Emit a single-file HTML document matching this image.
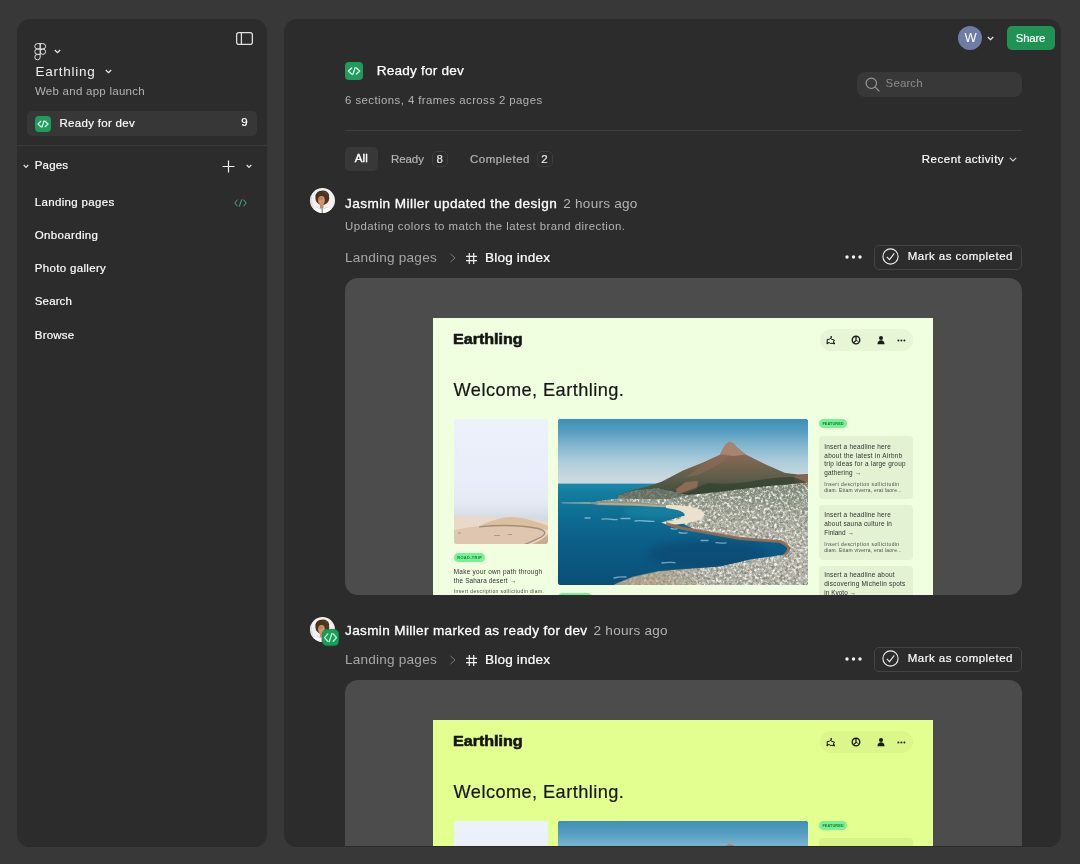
<!DOCTYPE html>
<html>
<head>
<meta charset="utf-8">
<title>Ready for dev</title>
<style>
*{box-sizing:border-box;margin:0;padding:0}
html,body{width:1080px;height:864px;overflow:hidden;background:#383838}
body{font-family:"Liberation Sans",sans-serif;color:#fff;position:relative;-webkit-font-smoothing:antialiased}
.abs{position:absolute}
.panel:after{content:'';position:absolute;left:0;right:0;bottom:0;height:1.8px;background:#2a2a2a}
.panel{position:absolute;background:#2c2c2c;border-radius:13px;overflow:hidden;will-change:transform}
#side{left:17px;top:19px;width:250px;height:828.3px}
#main{left:284px;top:19px;width:777px;height:828.3px}
.t{position:absolute;white-space:nowrap;line-height:16px;font-size:12px;color:#fff}
.med{-webkit-text-stroke:0.35px currentColor}
.sec{color:#b3b3b3}
svg{position:absolute;overflow:visible}

.ttl,.ago,.crumb{font-size:14px;line-height:20px}
.mock{position:absolute;width:500px;overflow:hidden;color:#1a1a1a}
.mock div{position:absolute;white-space:nowrap}
.mock .t{line-height:normal}
.mlogo{left:20px;top:12px;font-size:14px;line-height:18px;font-weight:bold;-webkit-text-stroke:0.7px #151515;color:#151515;letter-spacing:0.3px}
.mpill{left:387px;top:11px;width:93px;height:22px;border-radius:11px;background:rgba(0,0,0,0.036)}
.mwel{left:21px;top:62px;font-size:18px;line-height:24px;color:#161616}
.mimg1{left:21px;top:101px;width:94px;height:125px;border-radius:3px;overflow:hidden;background:linear-gradient(#ecf1fb 0%,#e9edf9 50%,#e5eaf4 66%,#dbe1eb 75%,#d4dae4 79%,#d4dae4 100%)}
.mtag{height:9px;border-radius:4.5px;background:#76f294;color:#1c7a3c;font-size:3.6px;line-height:9px;text-align:center;font-weight:bold;letter-spacing:0.25px}
.mh{font-size:6.3px;line-height:8px;color:#222;left:5px}
.md{font-size:4.9px;line-height:6px;color:#333;left:5px}
.mcard{left:386px;width:94px;border-radius:4px;background:rgba(0,0,0,0.05)}
</style>
</head>
<body>

<!-- ================= SIDEBAR ================= -->
<div class="panel" id="side"><div class="abs" style="left:-17px;top:-19px;width:1080px;height:864px">
  <!-- panel toggle icon -->
  <svg style="left:236.3px;top:31.8px" width="17" height="13" viewBox="0 0 17 13"><rect x="0.65" y="0.65" width="15.7" height="11.7" rx="2.2" fill="none" stroke="#e0e0e0" stroke-width="1.25"/><line x1="5.4" y1="1" x2="5.4" y2="12" stroke="#e0e0e0" stroke-width="1.25"/></svg>
  <!-- figma logo -->
  <svg style="left:34px;top:43px" width="13" height="17" viewBox="0 0 13 17" fill="none" stroke="#e2e2e2" stroke-width="1">
    <path d="M6.2 0.6H3.5a2.7 2.7 0 0 0 0 5.4h2.7z"/>
    <path d="M6.2 0.6h2.7a2.7 2.7 0 0 1 0 5.4H6.2z"/>
    <path d="M6.2 6H3.5a2.7 2.7 0 0 0 0 5.4h2.7z"/>
    <circle cx="8.9" cy="8.7" r="2.7"/>
    <path d="M6.2 11.4H3.5a2.7 2.7 0 1 0 2.7 2.7z"/>
  </svg>
  <svg style="left:54px;top:49px" width="7" height="5" viewBox="0 0 7 5"><path d="M0.8 1l2.7 2.7L6.2 1" fill="none" stroke="#e6e6e6" stroke-width="1.3"/></svg>
  <svg style="left:105px;top:69px" width="7" height="5" viewBox="0 0 7 5"><path d="M0.8 1l2.7 2.7L6.2 1" fill="none" stroke="#e6e6e6" stroke-width="1.3"/></svg>

  <!-- selected row -->
  <div class="abs" style="left:27px;top:111px;width:230px;height:25px;border-radius:5px;background:#373737"></div>
  <svg style="left:35px;top:116px" width="16" height="16" viewBox="0 0 16 16"><rect width="16" height="16" rx="4" fill="#1f9b5c"/><path d="M5.9 5.3L3 8l2.9 2.7M10.1 5.3L13 8l-2.9 2.7M9 4.9L7 11.1" fill="none" stroke="#dcf8e6" stroke-width="1.25" stroke-linecap="round" stroke-linejoin="round"/></svg>

  <div class="abs" style="left:17px;top:145.3px;width:250px;height:1px;background:#3a3a3a"></div>

  <svg style="left:23px;top:164px" width="6" height="5" viewBox="0 0 6 5"><path d="M0.7 1l2.3 2.3L5.3 1" fill="none" stroke="#e6e6e6" stroke-width="1.2"/></svg>
  <svg style="left:222px;top:160px" width="13" height="13" viewBox="0 0 13 13"><path d="M6.5 0.5v12M0.5 6.5h12" stroke="#f0f0f0" stroke-width="1.2"/></svg>
  <svg style="left:246px;top:164px" width="6" height="5" viewBox="0 0 6 5"><path d="M0.7 1l2.3 2.3L5.3 1" fill="none" stroke="#e6e6e6" stroke-width="1.2"/></svg>
  <svg style="left:234px;top:199px" width="13" height="8" viewBox="0 0 13 8"><path d="M3.2 1L0.8 4l2.4 3M9.8 1l2.4 3-2.4 3M7.6 0.8L5.4 7.2" fill="none" stroke="#48ae80" stroke-width="1" stroke-linecap="round" stroke-linejoin="round"/></svg>
  <div class="t" style="left:35.60px;top:61.52px;font-size:13.5px;line-height:19px;color:#f0f0f0;letter-spacing:0.738px;">Earthling</div><div class="t" style="left:34.90px;top:83.42px;font-size:11.5px;line-height:16px;color:#b3b3b3;letter-spacing:0.265px;">Web and app launch</div><div class="t" style="left:59.50px;top:114.62px;font-size:11.5px;line-height:16px;color:#ffffff;letter-spacing:0.299px;-webkit-text-stroke:0.18px #ffffff;">Ready for dev</div><div class="t" style="left:241.20px;top:114.42px;font-size:11.5px;line-height:16px;color:#ffffff;-webkit-text-stroke:0.18px #ffffff;">9</div><div class="t" style="left:34.80px;top:157.42px;font-size:11.5px;line-height:16px;color:#ffffff;letter-spacing:0.148px;-webkit-text-stroke:0.18px #ffffff;">Pages</div><div class="t" style="left:34.80px;top:194.12px;font-size:11.5px;line-height:16px;color:#ffffff;letter-spacing:0.328px;-webkit-text-stroke:0.18px #ffffff;">Landing pages</div><div class="t" style="left:34.80px;top:227.22px;font-size:11.5px;line-height:16px;color:#ffffff;letter-spacing:0.343px;-webkit-text-stroke:0.18px #ffffff;">Onboarding</div><div class="t" style="left:34.80px;top:260.32px;font-size:11.5px;line-height:16px;color:#ffffff;letter-spacing:0.323px;-webkit-text-stroke:0.18px #ffffff;">Photo gallery</div><div class="t" style="left:34.80px;top:293.42px;font-size:11.5px;line-height:16px;color:#ffffff;letter-spacing:0.133px;-webkit-text-stroke:0.18px #ffffff;">Search</div><div class="t" style="left:34.80px;top:326.52px;font-size:11.5px;line-height:16px;color:#ffffff;letter-spacing:0.208px;-webkit-text-stroke:0.18px #ffffff;">Browse</div>
</div></div>

<!-- ================= MAIN ================= -->
<div class="panel" id="main"><div class="abs" id="mainin" style="left:-284px;top:-19px;width:1080px;height:864px">
  <!-- top right -->
  <div class="abs" style="left:958px;top:26px;width:24px;height:24px;border-radius:12px;background:#6e7ca6"></div>
  <svg style="left:987px;top:36px" width="7" height="5" viewBox="0 0 7 5"><path d="M0.8 1l2.7 2.7L6.2 1" fill="none" stroke="#e6e6e6" stroke-width="1.3"/></svg>
  <div class="abs" style="left:1007px;top:26px;width:48px;height:24px;border-radius:5px;background:#1f9254"></div>

  <!-- header -->
  <svg style="left:345px;top:62px" width="18" height="18" viewBox="0 0 16 16"><rect width="16" height="16" rx="3.6" fill="#1f9b5c"/><path d="M5.9 5.3L3 8l2.9 2.7M10.1 5.3L13 8l-2.9 2.7M9 4.9L7 11.1" fill="none" stroke="#dcf8e6" stroke-width="1.15" stroke-linecap="round" stroke-linejoin="round"/></svg>

  <!-- search -->
  <div class="abs" style="left:857px;top:72px;width:165px;height:25px;border-radius:8px;background:#383838"></div>
  <svg style="left:865px;top:77px" width="15" height="15" viewBox="0 0 15 15"><circle cx="6.3" cy="6.3" r="5.2" fill="none" stroke="#9c9c9c" stroke-width="1.1"/><path d="M10.2 10.2l3.8 3.8" stroke="#9c9c9c" stroke-width="1.1" stroke-linecap="round"/></svg>

  <div class="abs" style="left:345px;top:130px;width:677px;height:1px;background:#3e3e3e"></div>

  <!-- tabs -->
  <div class="abs" style="left:345px;top:147px;width:33px;height:24px;border-radius:5px;background:#383838"></div>
  <div class="abs" style="left:432.2px;top:151.2px;width:15.8px;height:15.8px;border-radius:5px;border:1px solid #3d3d3d"></div>
  <div class="abs" style="left:537px;top:151.2px;width:15.8px;height:15.8px;border-radius:5px;border:1px solid #3d3d3d"></div>
  <svg style="left:1009px;top:157px" width="8" height="5" viewBox="0 0 8 5"><path d="M0.8 0.8l3.2 3.2 3.2-3.2" fill="none" stroke="#cfcfcf" stroke-width="1.1"/></svg>

  <div class="t" style="left:964.50px;top:28.83px;font-size:12.9px;line-height:18px;color:#ffffff;">W</div><div class="t" style="left:1015.80px;top:30.18px;font-size:11.3px;line-height:16px;color:#ffffff;letter-spacing:-0.164px;-webkit-text-stroke:0.18px #ffffff;">Share</div><div class="t" style="left:376.70px;top:60.79px;font-size:13.6px;line-height:19px;color:#ffffff;letter-spacing:0.213px;-webkit-text-stroke:0.25px #ffffff;">Ready for dev</div><div class="t" style="left:345.10px;top:91.55px;font-size:11.4px;line-height:16px;color:#b3b3b3;letter-spacing:0.431px;">6 sections, 4 frames across 2 pages</div><div class="t" style="left:885.60px;top:75.02px;font-size:11.5px;line-height:16px;color:#8c8c8c;letter-spacing:0.113px;">Search</div><div class="t" style="left:354.70px;top:150.42px;font-size:11.5px;line-height:16px;color:#ffffff;letter-spacing:0.209px;-webkit-text-stroke:0.42px #ffffff;">All</div><div class="t" style="left:390.90px;top:150.52px;font-size:11.5px;line-height:16px;color:#b3b3b3;letter-spacing:-0.062px;-webkit-text-stroke:0.2px #b3b3b3;">Ready</div><div class="t" style="left:436.50px;top:150.92px;font-size:11.5px;line-height:16px;color:#e6e6e6;-webkit-text-stroke:0.2px #e6e6e6;">8</div><div class="t" style="left:470.00px;top:150.52px;font-size:11.5px;line-height:16px;color:#b3b3b3;letter-spacing:0.472px;-webkit-text-stroke:0.2px #b3b3b3;">Completed</div><div class="t" style="left:541.30px;top:150.92px;font-size:11.5px;line-height:16px;color:#e6e6e6;-webkit-text-stroke:0.2px #e6e6e6;">2</div><div class="t" style="left:921.80px;top:150.52px;font-size:11.5px;line-height:16px;color:#ffffff;letter-spacing:0.501px;-webkit-text-stroke:0.18px #ffffff;">Recent activity</div>
  <svg style="left:309.9px;top:188.1px" width="25" height="25" viewBox="0 0 25 25"><defs><clipPath id="avc1"><circle cx="12.5" cy="12.5" r="12.4"/></clipPath><filter id="avb1" x="-20%" y="-20%" width="140%" height="140%"><feGaussianBlur stdDeviation="0.55"/></filter></defs><circle cx="12.5" cy="12.5" r="12.5" fill="#f1f1ef"/><g clip-path="url(#avc1)"><g filter="url(#avb1)"><path d="M3 25c.5-3.5 3-5 6.5-5.500h6c3.5.5 6 2 6.5 5.500z" fill="#fbfbfa"/><path d="M1 8c0 6 1.5 12 3.5 17" stroke="#dcdedd" stroke-width="1.4" fill="none"/><ellipse cx="12.3" cy="10.2" rx="6.9" ry="6.7" fill="#50341f"/><path d="M5.8 8.500c.5-3 2.5-4.8 5.5-5.2 3.5-.4 6.5 1.2 7.4 4.5" fill="none" stroke="#3b2a1c" stroke-width="1.2"/><rect x="9.9" y="14.5" width="3.6" height="6.2" rx="1.2" fill="#c58b68"/><ellipse cx="11.5" cy="12.3" rx="3.3" ry="4.3" fill="#d09673"/><ellipse cx="10.8" cy="10.6" rx="2.2" ry="1.3" fill="#b9805e"/><path d="M12.2 20.800v4.2" stroke="#5a5f63" stroke-width="0.9"/><path d="M6.5 19.200l4 1.800M17.5 19.200l-4 1.8" stroke="#c9cccb" stroke-width="0.7"/></g></g></svg><div class="t" style="left:345.00px;top:193.59px;font-size:13.6px;line-height:19px;color:#ffffff;letter-spacing:0.418px;-webkit-text-stroke:0.3px #ffffff;">Jasmin Miller updated the design</div><div class="t" style="left:563.30px;top:193.59px;font-size:13.6px;line-height:19px;color:#b3b3b3;letter-spacing:0.219px;">2 hours ago</div><div class="t" style="left:345.00px;top:218.25px;font-size:11.4px;line-height:16px;color:#b3b3b3;letter-spacing:0.450px;">Updating colors to match the latest brand direction.</div><div class="t" style="left:345.00px;top:247.99px;font-size:13.6px;line-height:19px;color:#a6a6a6;letter-spacing:0.208px;">Landing pages</div><svg style="left:448.5px;top:253px" width="8" height="10" viewBox="0 0 8 10"><path d="M1.5 1l4.5 4-4.5 4" fill="none" stroke="#7c7c7c" stroke-width="1"/></svg><svg style="left:466px;top:253px" width="11" height="11" viewBox="0 0 11 11"><path d="M3.3 0v11M7.7 0v11M0 3.3h11M0 7.7h11" stroke="#f0f0f0" stroke-width="1.2"/></svg><div class="t" style="left:485.00px;top:247.99px;font-size:13.6px;line-height:19px;color:#ffffff;letter-spacing:0.168px;-webkit-text-stroke:0.22px #ffffff;">Blog index</div><svg style="left:844.8px;top:254.8px" width="17" height="4" viewBox="0 0 17 4" fill="#f2f2f2"><circle cx="2" cy="2" r="1.7"/><circle cx="8.5" cy="2" r="1.7"/><circle cx="15" cy="2" r="1.7"/></svg><div class="abs" style="left:874px;top:245px;width:147.5px;height:24.5px;border-radius:5px;border:1px solid #444"></div><svg style="left:882.2px;top:248.2px" width="17" height="17" viewBox="0 0 17 17"><circle cx="8.5" cy="8.5" r="7.6" fill="none" stroke="#f0f0f0" stroke-width="1.1"/><path d="M4.8 8.9l2.7 2.8 4.8-6.3" fill="none" stroke="#f0f0f0" stroke-width="1.1"/></svg><div class="t" style="left:907.80px;top:247.82px;font-size:11.5px;line-height:16px;color:#ffffff;letter-spacing:0.465px;-webkit-text-stroke:0.18px #ffffff;">Mark as completed</div><div class="abs" style="left:345px;top:278px;width:677px;height:317px;border-radius:13px;background:#4c4c4c;overflow:hidden"><div class="mock" style="left:88px;top:40px;height:277px;background:#efffdf"><div class="t" style="left:20.00px;top:10.65px;font-size:14px;line-height:20px;color:#151515;font-weight:bold;-webkit-text-stroke:0.55px #151515;transform:scaleX(1.1472);transform-origin:0 50%;">Earthling</div><div class="mpill"></div>
<svg style="left:393px;top:17px" width="10" height="10" viewBox="0 0 10 10" fill="none" stroke="#1a1a1a" stroke-width="1"><path d="M1.2 8.2V4.4h2.2L4.6 3l1 1.4 2.8.6-1 2 .8 1.4H4.2L3 7.4 1.2 8.2z" stroke-linejoin="round"/><circle cx="1.4" cy="8.3" r="0.9" fill="#1a1a1a" stroke="none"/><circle cx="8.2" cy="8.4" r="0.9" fill="#1a1a1a" stroke="none"/><circle cx="5.2" cy="2" r="0.9" fill="#1a1a1a" stroke="none"/></svg>
<svg style="left:418px;top:17px" width="10" height="10" viewBox="0 0 10 10" fill="none" stroke="#1a1a1a" stroke-width="1.35"><circle cx="5" cy="5" r="3.8"/><path d="M5 1.300v4.100l-2.3 2.2" stroke-width="1.25"/><path d="M5.2 5.300l2.3 1.3" stroke-width="0.9"/></svg>
<svg style="left:443px;top:17px" width="10" height="10" viewBox="0 0 10 10" fill="#1a1a1a"><circle cx="5" cy="2.9" r="2"/><path d="M1.4 9.2c.2-2.6 1.6-3.9 3.6-3.9s3.4 1.3 3.6 3.9z"/></svg>
<svg style="left:464.2px;top:20.6px" width="9" height="3" viewBox="0 0 9 3" fill="#1a1a1a"><circle cx="1.4" cy="1.5" r="0.95"/><circle cx="4.4" cy="1.5" r="0.95"/><circle cx="7.4" cy="1.5" r="0.95"/></svg>
<div class="t" style="left:20.60px;top:60.29px;font-size:18.2px;line-height:25px;color:#161616;letter-spacing:0.432px;-webkit-text-stroke:0.2px #161616;">Welcome, Earthling.</div><div class="mimg1"><svg style="left:0;top:0" width="94" height="125" viewBox="0 0 94 125"><defs><filter id="ds1" x="-5%" y="-5%" width="110%" height="110%"><feGaussianBlur stdDeviation="0.6"/></filter></defs><g filter="url(#ds1)"><path d="M-2 98.5 Q12 96.5 22 98 Q34 97 44 99 Q60 95.5 76 100 Q86 101 96 103.5 V127 H-2Z" fill="#ead8c9"/><path d="M25 107.5 Q36 101.5 50 98.6 Q64 96.5 78 101.5 Q90 105 96 108 V112 Q70 104 25 107.500Z" fill="#dcbf9f"/><path d="M25 107.5 Q60 104 84 109 Q96 112 90 117 Q82 122 70 127 H-2 V112 Q10 108 25 107.500Z" fill="#dfc6b1"/><path d="M25 107.8 Q60 104.5 84 109.5 Q95 112.5 88 117.5 Q80 122 69 126" fill="none" stroke="#a48c7b" stroke-width="1.3"/><path d="M96 110 Q96 118 74 127 H96Z" fill="#c9ab92"/><path d="M4 114h3M40 116.500h6M54 115.500h4" stroke="#a8917f" stroke-width="0.9"/></g></svg></div><div class="mtag" style="left:21px;top:235px;width:31px"></div><div class="t" style="left:24.30px;top:236.75px;font-size:3.9px;line-height:5px;color:#167a3a;letter-spacing:0.359px;font-weight:bold;">ROAD-TRIP</div><div class="t" style="left:20.70px;top:249.08px;font-size:6.4px;line-height:9px;color:#303030;letter-spacing:0.296px;">Make your own path through</div><div class="t" style="left:20.70px;top:257.68px;font-size:6.4px;line-height:9px;color:#303030;letter-spacing:0.195px;">the Sahara desert →</div><div class="t" style="left:20.70px;top:270.30px;font-size:4.9px;line-height:7px;color:#4a4a4a;letter-spacing:0.434px;">Insert description sollicitudin diam.</div><svg class="photo" style="left:125.4px;top:101.4px;border-radius:3px;overflow:hidden" width="250" height="166" viewBox="0 0 250 166">
  <defs>
    <linearGradient id="skyG1" x1="0" y1="0" x2="0" y2="1"><stop offset="0" stop-color="#3f8fb6"/><stop offset="0.2" stop-color="#579fc2"/><stop offset="0.4" stop-color="#82b6ce"/><stop offset="0.6" stop-color="#a5c8d8"/><stop offset="0.82" stop-color="#c2d6de"/><stop offset="1" stop-color="#cfdbe0"/></linearGradient>
    <linearGradient id="seaG1" x1="0" y1="0" x2="0" y2="1"><stop offset="0" stop-color="#1c89ab"/><stop offset="0.1" stop-color="#127c9f"/><stop offset="0.3" stop-color="#0e6e94"/><stop offset="0.55" stop-color="#0c5f88"/><stop offset="1" stop-color="#0a4f78"/></linearGradient>
    <linearGradient id="mtG1" gradientUnits="userSpaceOnUse" x1="0" y1="22" x2="0" y2="80"><stop offset="0" stop-color="#a98672"/><stop offset="0.16" stop-color="#8f6b56"/><stop offset="0.4" stop-color="#77644f"/><stop offset="0.64" stop-color="#5c5d4a"/><stop offset="1" stop-color="#3a4835"/></linearGradient>
    <linearGradient id="ctG1" gradientUnits="userSpaceOnUse" x1="0" y1="64" x2="0" y2="166"><stop offset="0" stop-color="#76826f"/><stop offset="0.25" stop-color="#9fa192"/><stop offset="0.6" stop-color="#b9b7ab"/><stop offset="1" stop-color="#b4afa5"/></linearGradient>
    <filter id="nz1" x="0" y="0" width="100%" height="100%"><feTurbulence type="fractalNoise" baseFrequency="0.36" numOctaves="3" seed="7" result="n"/><feColorMatrix in="n" type="matrix" values="0 0 0 0 0.97  0 0 0 0 0.95  0 0 0 0 0.91  2.8 0 0 0 -1.24" result="lite"/><feColorMatrix in="n" type="matrix" values="0 0 0 0 0.2  0 0 0 0 0.25  0 0 0 0 0.19  0 2.8 0 0 -1.2" result="dark"/><feMerge result="m"><feMergeNode in="SourceGraphic"/><feMergeNode in="lite"/><feMergeNode in="dark"/></feMerge><feComposite in="m" in2="SourceGraphic" operator="in"/></filter>
    <linearGradient id="tnG1" gradientUnits="userSpaceOnUse" x1="56" y1="0" x2="150" y2="0"><stop offset="0" stop-color="#a8977c" stop-opacity="0.7"/><stop offset="0.6" stop-color="#a8977c" stop-opacity="0.45"/><stop offset="1" stop-color="#a8977c" stop-opacity="0"/></linearGradient>
    <filter id="bl1" x="-10%" y="-10%" width="120%" height="120%"><feGaussianBlur stdDeviation="0.7"/></filter>
    <filter id="bl21" x="-20%" y="-20%" width="140%" height="140%"><feGaussianBlur stdDeviation="3"/></filter>
  </defs>
  <rect width="250" height="166" fill="#0d5482"/>
  <rect width="250" height="66" fill="url(#skyG1)"/>
  <rect y="64.6" width="250" height="102" fill="url(#seaG1)"/>
  <ellipse cx="100" cy="93" rx="34" ry="7" fill="#1a90ad" opacity="0.5" filter="url(#bl21)"/>
  <ellipse cx="150" cy="135" rx="60" ry="14" fill="#0a416b" opacity="0.45" filter="url(#bl21)"/>
  <!-- mountain -->
  <g filter="url(#bl1)">
  <path d="M58 77 L75 71 L90 67.5 L104 62.5 L125 51.5 L145 43.5 L161.9 35.8 L164.9 29.8 L168 25 L171.5 22.8 L175.5 24.6 L179.4 28.7 L187.7 35.6 L207.2 45.3 L226.6 53.7 L240 55.6 L250 55 L250 82 L100 84 Z" fill="url(#mtG1)"/>
  <path d="M161.9 35.8 L164.9 29.8 L168 25 L171.5 22.8 L175.5 24.6 L179.4 28.7 L187.7 35.6 L176 37 L168 36.5 Z" fill="#a8846f"/>
  <path d="M118 70 L128 63 L140 62 L139 70 L128 74 L119 74 Z" fill="#96705b" opacity="0.85"/><path d="M150 42 L165 35 L172 36 L160 46 L140 56 L128 58 Z" fill="#8f6a55" opacity="0.55"/>
  <path d="M236 57 L250 55.5 L250 66 L238 66 Z" fill="#8c6652" opacity="0.9"/>
  <path d="M112 78 Q135 70 150 64 Q170 66 190 63 Q215 58 236 58 L250 64 L250 82 L112 84 Z" fill="#2f3f2d" opacity="0.62"/>
  </g>
  <!-- city / land -->
  <g filter="url(#nz1)">
  <path d="M60 76.5 L78 71 L100 69.5 L130 76 L160 73 L200 68 L250 63.5 L250 166 L56 166 L58 165 L75 158 L100 152.5 L121.6 150.5 L161.8 147.5 L192 140.5 L226 135.5 L233 129 L222 122 L182 119 L137.7 111 L121 103 L104 103 L128 96 L124 89 L110 87.5 L60 84.5 L34 85 L40 82 L60 79.5 Z" fill="url(#ctG1)"/>
  </g>
  <path d="M60 76.5 L78 71 L100 69.5 L130 76 L112 80 L86 80 L60 79.500Z" fill="#566457" opacity="0.7" filter="url(#bl1)"/>
  <!-- thin rocky strip -->
  <path d="M2 84.3 L34 83.3 L44 82 L60 82.5 L80 83 L110 86 L110 88.5 L80 87 L56 86.4 L40 86 L34 85 Z" fill="#8f9488" opacity="0.95" filter="url(#bl1)"/>
  <path d="M40 84.6 L76 85.4 L108 87.5" fill="none" stroke="#bfae95" stroke-width="1.6" opacity="0.85" filter="url(#bl1)"/>
  <!-- beach -->
  <path d="M108 86 Q131 85.5 143 91 Q150 96.5 142 101 Q128 105.5 110 106 L103 103.5 Q121 101.5 126.5 97 Q128.5 91.5 108 89 Z" fill="#ece1cd" filter="url(#bl1)"/>
  <!-- coast edge -->
  <path d="M108 104.5 Q124 110 137.7 111.5 L182 119.5 L222 122.5 Q236 128 227 135.5" fill="none" stroke="#9a6c52" stroke-width="3" opacity="0.9" filter="url(#bl1)"/>
  <path d="M56 166 L58 164.5 L75 157.5 L100 152 L121.6 150 L150 148 L150 166 Z" fill="url(#tnG1)" filter="url(#bl1)"/>
  <!-- foam -->
  <g fill="none" stroke="#d6e8f0" stroke-linecap="round" opacity="0.55" filter="url(#bl1)"><path d="M27 99h5M44 100.200q4-.8 8 0t7 .3M63 99.500h9M77 102q5-.6 10 0t9 .4M113 109.500q3 .8 6 .4M121 113.500q4 .9 8 .4M143 121.500h7M158 123.600q5 .8 10 .2M104 144q6-1 13-.4M56 159q6-1.5 12-1" stroke-width="1.3"/><path d="M4 83.800h28" stroke-width="0.8"/></g>
</svg>
<div class="mtag" style="left:125px;top:275px;width:34px;height:9px"></div><div class="mtag" style="left:386px;top:101px;width:28px"></div><div class="t" style="left:389.40px;top:103.05px;font-size:3.9px;line-height:5px;color:#167a3a;letter-spacing:0.042px;font-weight:bold;">FEATURED</div><div class="mcard" style="top:118px;height:63px"></div><div class="t" style="left:391.30px;top:123.88px;font-size:6.4px;line-height:9px;color:#303030;letter-spacing:0.222px;">Insert a headline here</div><div class="t" style="left:391.30px;top:132.58px;font-size:6.4px;line-height:9px;color:#303030;letter-spacing:0.302px;">about the latest in Airbnb</div><div class="t" style="left:391.30px;top:141.28px;font-size:6.4px;line-height:9px;color:#303030;letter-spacing:0.244px;">trip ideas for a large group</div><div class="t" style="left:391.30px;top:149.98px;font-size:6.4px;line-height:9px;color:#303030;letter-spacing:0.197px;">gathering →</div><div class="t" style="left:391.30px;top:162.70px;font-size:4.9px;line-height:7px;color:#4a4a4a;letter-spacing:0.454px;">Insert description sollicitudin</div><div class="t" style="left:391.30px;top:169.10px;font-size:4.9px;line-height:7px;color:#4a4a4a;letter-spacing:0.245px;">diam. Etiam viverra, erat laore...</div><div class="mcard" style="top:187px;height:55px"></div><div class="t" style="left:391.30px;top:192.48px;font-size:6.4px;line-height:9px;color:#303030;letter-spacing:0.222px;">Insert a headline here</div><div class="t" style="left:391.30px;top:201.28px;font-size:6.4px;line-height:9px;color:#303030;letter-spacing:0.224px;">about sauna culture in</div><div class="t" style="left:391.30px;top:210.08px;font-size:6.4px;line-height:9px;color:#303030;letter-spacing:0.045px;">Finland →</div><div class="t" style="left:391.30px;top:222.70px;font-size:4.9px;line-height:7px;color:#4a4a4a;letter-spacing:0.454px;">Insert description sollicitudin</div><div class="t" style="left:391.30px;top:229.10px;font-size:4.9px;line-height:7px;color:#4a4a4a;letter-spacing:0.245px;">diam. Etiam viverra, erat laore...</div><div class="mcard" style="top:248px;height:60px"></div><div class="t" style="left:391.30px;top:252.48px;font-size:6.4px;line-height:9px;color:#303030;letter-spacing:0.235px;">Insert a headline about</div><div class="t" style="left:391.30px;top:261.28px;font-size:6.4px;line-height:9px;color:#303030;letter-spacing:0.256px;">discovering Michelin spots</div><div class="t" style="left:391.30px;top:269.98px;font-size:6.4px;line-height:9px;color:#303030;letter-spacing:0.048px;">in Kyoto →</div></div></div><svg style="left:309.9px;top:616.8px" width="25" height="25" viewBox="0 0 25 25"><defs><clipPath id="avc2"><circle cx="12.5" cy="12.5" r="12.4"/></clipPath><filter id="avb2" x="-20%" y="-20%" width="140%" height="140%"><feGaussianBlur stdDeviation="0.55"/></filter></defs><circle cx="12.5" cy="12.5" r="12.5" fill="#f1f1ef"/><g clip-path="url(#avc2)"><g filter="url(#avb2)"><path d="M3 25c.5-3.5 3-5 6.5-5.500h6c3.5.5 6 2 6.5 5.500z" fill="#fbfbfa"/><path d="M1 8c0 6 1.5 12 3.5 17" stroke="#dcdedd" stroke-width="1.4" fill="none"/><ellipse cx="12.3" cy="10.2" rx="6.9" ry="6.7" fill="#50341f"/><path d="M5.8 8.500c.5-3 2.5-4.8 5.5-5.2 3.5-.4 6.5 1.2 7.4 4.5" fill="none" stroke="#3b2a1c" stroke-width="1.2"/><rect x="9.9" y="14.5" width="3.6" height="6.2" rx="1.2" fill="#c58b68"/><ellipse cx="11.5" cy="12.3" rx="3.3" ry="4.3" fill="#d09673"/><ellipse cx="10.8" cy="10.6" rx="2.2" ry="1.3" fill="#b9805e"/><path d="M12.2 20.800v4.2" stroke="#5a5f63" stroke-width="0.9"/><path d="M6.5 19.200l4 1.800M17.5 19.200l-4 1.8" stroke="#c9cccb" stroke-width="0.7"/></g></g></svg><svg style="left:321.8px;top:629.3px" width="17.1" height="17.1" viewBox="-0.3 -0.3 17.1 17.1"><rect x="0" y="0" width="16.5" height="16.5" rx="4.6" fill="#1b9d58" stroke="#176f41" stroke-width="0.6"/><path d="M5.5 4.7L2.3 8.3l3.2 3.6M11 4.7l3.2 3.6-3.2 3.600M9.6 4.200L6.9 12.4" fill="none" stroke="#b9f7d6" stroke-width="1.3" stroke-linecap="round" stroke-linejoin="round"/></svg><div class="t" style="left:345.00px;top:620.59px;font-size:13.6px;line-height:19px;color:#ffffff;letter-spacing:0.345px;-webkit-text-stroke:0.3px #ffffff;">Jasmin Miller marked as ready for dev</div><div class="t" style="left:593.60px;top:620.59px;font-size:13.6px;line-height:19px;color:#b3b3b3;letter-spacing:0.219px;">2 hours ago</div><div class="t" style="left:345.00px;top:649.99px;font-size:13.6px;line-height:19px;color:#a6a6a6;letter-spacing:0.208px;">Landing pages</div><svg style="left:448.5px;top:655px" width="8" height="10" viewBox="0 0 8 10"><path d="M1.5 1l4.5 4-4.5 4" fill="none" stroke="#7c7c7c" stroke-width="1"/></svg><svg style="left:466px;top:655px" width="11" height="11" viewBox="0 0 11 11"><path d="M3.3 0v11M7.7 0v11M0 3.3h11M0 7.7h11" stroke="#f0f0f0" stroke-width="1.2"/></svg><div class="t" style="left:485.00px;top:649.99px;font-size:13.6px;line-height:19px;color:#ffffff;letter-spacing:0.168px;-webkit-text-stroke:0.22px #ffffff;">Blog index</div><svg style="left:844.8px;top:656.8px" width="17" height="4" viewBox="0 0 17 4" fill="#f2f2f2"><circle cx="2" cy="2" r="1.7"/><circle cx="8.5" cy="2" r="1.7"/><circle cx="15" cy="2" r="1.7"/></svg><div class="abs" style="left:874px;top:647px;width:147.5px;height:24.5px;border-radius:5px;border:1px solid #444"></div><svg style="left:882.2px;top:650.2px" width="17" height="17" viewBox="0 0 17 17"><circle cx="8.5" cy="8.5" r="7.6" fill="none" stroke="#f0f0f0" stroke-width="1.1"/><path d="M4.8 8.9l2.7 2.8 4.8-6.3" fill="none" stroke="#f0f0f0" stroke-width="1.1"/></svg><div class="t" style="left:907.80px;top:649.82px;font-size:11.5px;line-height:16px;color:#ffffff;letter-spacing:0.465px;-webkit-text-stroke:0.18px #ffffff;">Mark as completed</div><div class="abs" style="left:345px;top:680px;width:677px;height:200px;border-radius:13px;background:#4c4c4c;overflow:hidden"><div class="mock" style="left:88px;top:40px;height:160px;background:#e3ff8f"><div class="t" style="left:20.00px;top:10.65px;font-size:14px;line-height:20px;color:#151515;font-weight:bold;-webkit-text-stroke:0.55px #151515;transform:scaleX(1.1472);transform-origin:0 50%;">Earthling</div><div class="mpill"></div>
<svg style="left:393px;top:17px" width="10" height="10" viewBox="0 0 10 10" fill="none" stroke="#1a1a1a" stroke-width="1"><path d="M1.2 8.2V4.4h2.2L4.6 3l1 1.4 2.8.6-1 2 .8 1.4H4.2L3 7.4 1.2 8.2z" stroke-linejoin="round"/><circle cx="1.4" cy="8.3" r="0.9" fill="#1a1a1a" stroke="none"/><circle cx="8.2" cy="8.4" r="0.9" fill="#1a1a1a" stroke="none"/><circle cx="5.2" cy="2" r="0.9" fill="#1a1a1a" stroke="none"/></svg>
<svg style="left:418px;top:17px" width="10" height="10" viewBox="0 0 10 10" fill="none" stroke="#1a1a1a" stroke-width="1.35"><circle cx="5" cy="5" r="3.8"/><path d="M5 1.300v4.100l-2.3 2.2" stroke-width="1.25"/><path d="M5.2 5.300l2.3 1.3" stroke-width="0.9"/></svg>
<svg style="left:443px;top:17px" width="10" height="10" viewBox="0 0 10 10" fill="#1a1a1a"><circle cx="5" cy="2.9" r="2"/><path d="M1.4 9.2c.2-2.6 1.6-3.9 3.6-3.9s3.4 1.3 3.6 3.9z"/></svg>
<svg style="left:464.2px;top:20.6px" width="9" height="3" viewBox="0 0 9 3" fill="#1a1a1a"><circle cx="1.4" cy="1.5" r="0.95"/><circle cx="4.4" cy="1.5" r="0.95"/><circle cx="7.4" cy="1.5" r="0.95"/></svg>
<div class="t" style="left:20.60px;top:60.29px;font-size:18.2px;line-height:25px;color:#161616;letter-spacing:0.432px;-webkit-text-stroke:0.2px #161616;">Welcome, Earthling.</div><div class="mimg1"><svg style="left:0;top:0" width="94" height="125" viewBox="0 0 94 125"><defs><filter id="ds2" x="-5%" y="-5%" width="110%" height="110%"><feGaussianBlur stdDeviation="0.6"/></filter></defs><g filter="url(#ds2)"><path d="M-2 98.5 Q12 96.5 22 98 Q34 97 44 99 Q60 95.5 76 100 Q86 101 96 103.5 V127 H-2Z" fill="#ead8c9"/><path d="M25 107.5 Q36 101.5 50 98.6 Q64 96.5 78 101.5 Q90 105 96 108 V112 Q70 104 25 107.500Z" fill="#dcbf9f"/><path d="M25 107.5 Q60 104 84 109 Q96 112 90 117 Q82 122 70 127 H-2 V112 Q10 108 25 107.500Z" fill="#dfc6b1"/><path d="M25 107.8 Q60 104.5 84 109.5 Q95 112.5 88 117.5 Q80 122 69 126" fill="none" stroke="#a48c7b" stroke-width="1.3"/><path d="M96 110 Q96 118 74 127 H96Z" fill="#c9ab92"/><path d="M4 114h3M40 116.500h6M54 115.500h4" stroke="#a8917f" stroke-width="0.9"/></g></svg></div><div class="mtag" style="left:21px;top:235px;width:31px"></div><div class="t" style="left:24.30px;top:236.75px;font-size:3.9px;line-height:5px;color:#167a3a;letter-spacing:0.359px;font-weight:bold;">ROAD-TRIP</div><div class="t" style="left:20.70px;top:249.08px;font-size:6.4px;line-height:9px;color:#303030;letter-spacing:0.296px;">Make your own path through</div><div class="t" style="left:20.70px;top:257.68px;font-size:6.4px;line-height:9px;color:#303030;letter-spacing:0.195px;">the Sahara desert →</div><div class="t" style="left:20.70px;top:270.30px;font-size:4.9px;line-height:7px;color:#4a4a4a;letter-spacing:0.434px;">Insert description sollicitudin diam.</div><svg class="photo" style="left:125.4px;top:101.4px;border-radius:3px;overflow:hidden" width="250" height="166" viewBox="0 0 250 166">
  <defs>
    <linearGradient id="skyG2" x1="0" y1="0" x2="0" y2="1"><stop offset="0" stop-color="#3f8fb6"/><stop offset="0.2" stop-color="#579fc2"/><stop offset="0.4" stop-color="#82b6ce"/><stop offset="0.6" stop-color="#a5c8d8"/><stop offset="0.82" stop-color="#c2d6de"/><stop offset="1" stop-color="#cfdbe0"/></linearGradient>
    <linearGradient id="seaG2" x1="0" y1="0" x2="0" y2="1"><stop offset="0" stop-color="#1c89ab"/><stop offset="0.1" stop-color="#127c9f"/><stop offset="0.3" stop-color="#0e6e94"/><stop offset="0.55" stop-color="#0c5f88"/><stop offset="1" stop-color="#0a4f78"/></linearGradient>
    <linearGradient id="mtG2" gradientUnits="userSpaceOnUse" x1="0" y1="22" x2="0" y2="80"><stop offset="0" stop-color="#a98672"/><stop offset="0.16" stop-color="#8f6b56"/><stop offset="0.4" stop-color="#77644f"/><stop offset="0.64" stop-color="#5c5d4a"/><stop offset="1" stop-color="#3a4835"/></linearGradient>
    <linearGradient id="ctG2" gradientUnits="userSpaceOnUse" x1="0" y1="64" x2="0" y2="166"><stop offset="0" stop-color="#76826f"/><stop offset="0.25" stop-color="#9fa192"/><stop offset="0.6" stop-color="#b9b7ab"/><stop offset="1" stop-color="#b4afa5"/></linearGradient>
    <filter id="nz2" x="0" y="0" width="100%" height="100%"><feTurbulence type="fractalNoise" baseFrequency="0.36" numOctaves="3" seed="7" result="n"/><feColorMatrix in="n" type="matrix" values="0 0 0 0 0.97  0 0 0 0 0.95  0 0 0 0 0.91  2.8 0 0 0 -1.24" result="lite"/><feColorMatrix in="n" type="matrix" values="0 0 0 0 0.2  0 0 0 0 0.25  0 0 0 0 0.19  0 2.8 0 0 -1.2" result="dark"/><feMerge result="m"><feMergeNode in="SourceGraphic"/><feMergeNode in="lite"/><feMergeNode in="dark"/></feMerge><feComposite in="m" in2="SourceGraphic" operator="in"/></filter>
    <linearGradient id="tnG2" gradientUnits="userSpaceOnUse" x1="56" y1="0" x2="150" y2="0"><stop offset="0" stop-color="#a8977c" stop-opacity="0.7"/><stop offset="0.6" stop-color="#a8977c" stop-opacity="0.45"/><stop offset="1" stop-color="#a8977c" stop-opacity="0"/></linearGradient>
    <filter id="bl22" x="-10%" y="-10%" width="120%" height="120%"><feGaussianBlur stdDeviation="0.7"/></filter>
    <filter id="bl22" x="-20%" y="-20%" width="140%" height="140%"><feGaussianBlur stdDeviation="3"/></filter>
  </defs>
  <rect width="250" height="166" fill="#0d5482"/>
  <rect width="250" height="66" fill="url(#skyG2)"/>
  <rect y="64.6" width="250" height="102" fill="url(#seaG2)"/>
  <ellipse cx="100" cy="93" rx="34" ry="7" fill="#1a90ad" opacity="0.5" filter="url(#bl22)"/>
  <ellipse cx="150" cy="135" rx="60" ry="14" fill="#0a416b" opacity="0.45" filter="url(#bl22)"/>
  <!-- mountain -->
  <g filter="url(#bl22)">
  <path d="M58 77 L75 71 L90 67.5 L104 62.5 L125 51.5 L145 43.5 L161.9 35.8 L164.9 29.8 L168 25 L171.5 22.8 L175.5 24.6 L179.4 28.7 L187.7 35.6 L207.2 45.3 L226.6 53.7 L240 55.6 L250 55 L250 82 L100 84 Z" fill="url(#mtG2)"/>
  <path d="M161.9 35.8 L164.9 29.8 L168 25 L171.5 22.8 L175.5 24.6 L179.4 28.7 L187.7 35.6 L176 37 L168 36.5 Z" fill="#a8846f"/>
  <path d="M118 70 L128 63 L140 62 L139 70 L128 74 L119 74 Z" fill="#96705b" opacity="0.85"/><path d="M150 42 L165 35 L172 36 L160 46 L140 56 L128 58 Z" fill="#8f6a55" opacity="0.55"/>
  <path d="M236 57 L250 55.5 L250 66 L238 66 Z" fill="#8c6652" opacity="0.9"/>
  <path d="M112 78 Q135 70 150 64 Q170 66 190 63 Q215 58 236 58 L250 64 L250 82 L112 84 Z" fill="#2f3f2d" opacity="0.62"/>
  </g>
  <!-- city / land -->
  <g filter="url(#nz2)">
  <path d="M60 76.5 L78 71 L100 69.5 L130 76 L160 73 L200 68 L250 63.5 L250 166 L56 166 L58 165 L75 158 L100 152.5 L121.6 150.5 L161.8 147.5 L192 140.5 L226 135.5 L233 129 L222 122 L182 119 L137.7 111 L121 103 L104 103 L128 96 L124 89 L110 87.5 L60 84.5 L34 85 L40 82 L60 79.5 Z" fill="url(#ctG2)"/>
  </g>
  <path d="M60 76.5 L78 71 L100 69.5 L130 76 L112 80 L86 80 L60 79.500Z" fill="#566457" opacity="0.7" filter="url(#bl22)"/>
  <!-- thin rocky strip -->
  <path d="M2 84.3 L34 83.3 L44 82 L60 82.5 L80 83 L110 86 L110 88.5 L80 87 L56 86.4 L40 86 L34 85 Z" fill="#8f9488" opacity="0.95" filter="url(#bl22)"/>
  <path d="M40 84.6 L76 85.4 L108 87.5" fill="none" stroke="#bfae95" stroke-width="1.6" opacity="0.85" filter="url(#bl22)"/>
  <!-- beach -->
  <path d="M108 86 Q131 85.5 143 91 Q150 96.5 142 101 Q128 105.5 110 106 L103 103.5 Q121 101.5 126.5 97 Q128.5 91.5 108 89 Z" fill="#ece1cd" filter="url(#bl22)"/>
  <!-- coast edge -->
  <path d="M108 104.5 Q124 110 137.7 111.5 L182 119.5 L222 122.5 Q236 128 227 135.5" fill="none" stroke="#9a6c52" stroke-width="3" opacity="0.9" filter="url(#bl22)"/>
  <path d="M56 166 L58 164.5 L75 157.5 L100 152 L121.6 150 L150 148 L150 166 Z" fill="url(#tnG2)" filter="url(#bl22)"/>
  <!-- foam -->
  <g fill="none" stroke="#d6e8f0" stroke-linecap="round" opacity="0.55" filter="url(#bl22)"><path d="M27 99h5M44 100.200q4-.8 8 0t7 .3M63 99.500h9M77 102q5-.6 10 0t9 .4M113 109.500q3 .8 6 .4M121 113.500q4 .9 8 .4M143 121.500h7M158 123.600q5 .8 10 .2M104 144q6-1 13-.4M56 159q6-1.5 12-1" stroke-width="1.3"/><path d="M4 83.800h28" stroke-width="0.8"/></g>
</svg>
<div class="mtag" style="left:125px;top:275px;width:34px;height:9px"></div><div class="mtag" style="left:386px;top:101px;width:28px"></div><div class="t" style="left:389.40px;top:103.05px;font-size:3.9px;line-height:5px;color:#167a3a;letter-spacing:0.042px;font-weight:bold;">FEATURED</div><div class="mcard" style="top:118px;height:63px"></div><div class="t" style="left:391.30px;top:123.88px;font-size:6.4px;line-height:9px;color:#303030;letter-spacing:0.222px;">Insert a headline here</div><div class="t" style="left:391.30px;top:132.58px;font-size:6.4px;line-height:9px;color:#303030;letter-spacing:0.302px;">about the latest in Airbnb</div><div class="t" style="left:391.30px;top:141.28px;font-size:6.4px;line-height:9px;color:#303030;letter-spacing:0.244px;">trip ideas for a large group</div><div class="t" style="left:391.30px;top:149.98px;font-size:6.4px;line-height:9px;color:#303030;letter-spacing:0.197px;">gathering →</div><div class="t" style="left:391.30px;top:162.70px;font-size:4.9px;line-height:7px;color:#4a4a4a;letter-spacing:0.454px;">Insert description sollicitudin</div><div class="t" style="left:391.30px;top:169.10px;font-size:4.9px;line-height:7px;color:#4a4a4a;letter-spacing:0.245px;">diam. Etiam viverra, erat laore...</div><div class="mcard" style="top:187px;height:55px"></div><div class="t" style="left:391.30px;top:192.48px;font-size:6.4px;line-height:9px;color:#303030;letter-spacing:0.222px;">Insert a headline here</div><div class="t" style="left:391.30px;top:201.28px;font-size:6.4px;line-height:9px;color:#303030;letter-spacing:0.224px;">about sauna culture in</div><div class="t" style="left:391.30px;top:210.08px;font-size:6.4px;line-height:9px;color:#303030;letter-spacing:0.045px;">Finland →</div><div class="t" style="left:391.30px;top:222.70px;font-size:4.9px;line-height:7px;color:#4a4a4a;letter-spacing:0.454px;">Insert description sollicitudin</div><div class="t" style="left:391.30px;top:229.10px;font-size:4.9px;line-height:7px;color:#4a4a4a;letter-spacing:0.245px;">diam. Etiam viverra, erat laore...</div><div class="mcard" style="top:248px;height:60px"></div><div class="t" style="left:391.30px;top:252.48px;font-size:6.4px;line-height:9px;color:#303030;letter-spacing:0.235px;">Insert a headline about</div><div class="t" style="left:391.30px;top:261.28px;font-size:6.4px;line-height:9px;color:#303030;letter-spacing:0.256px;">discovering Michelin spots</div><div class="t" style="left:391.30px;top:269.98px;font-size:6.4px;line-height:9px;color:#303030;letter-spacing:0.048px;">in Kyoto →</div></div></div>
</div></div>

</body>
</html>
